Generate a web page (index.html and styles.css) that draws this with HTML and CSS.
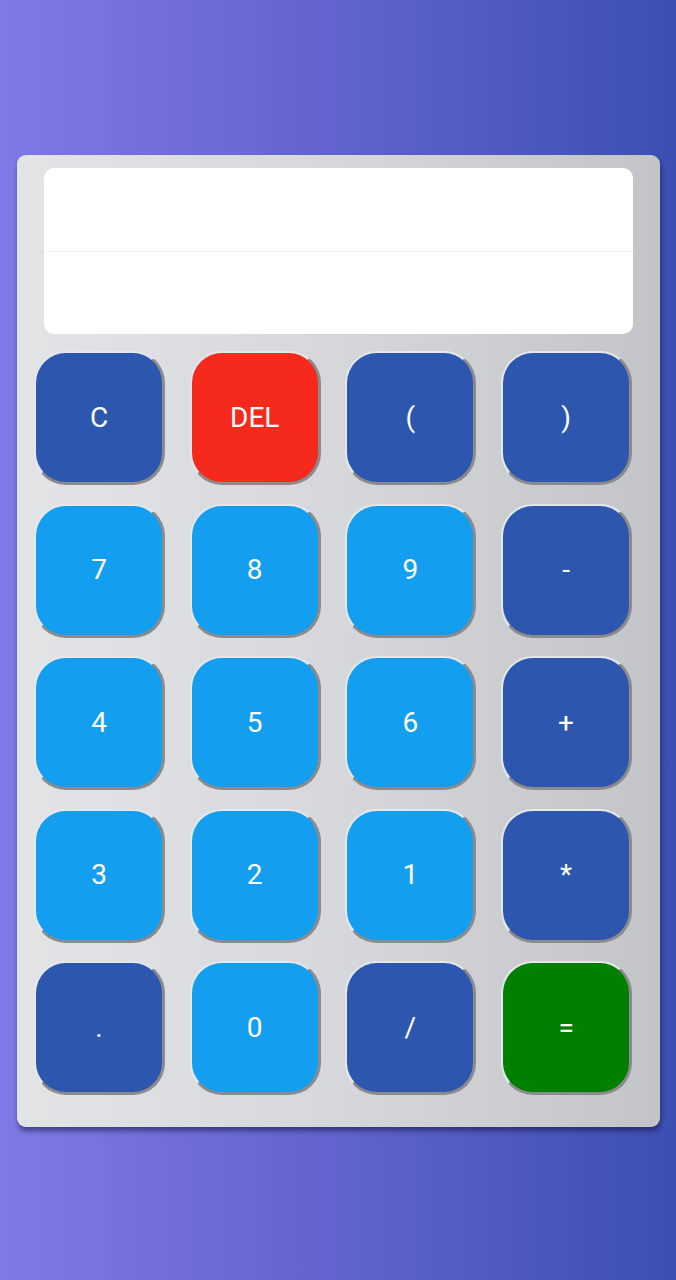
FILE: index.html
```html
<!DOCTYPE html>
<html lang="en">
<head>
<meta charset="utf-8">
<title>Calculator</title>
<link rel="stylesheet" href="styles.css">
</head>
<body>
<main class="calc">
  <div class="display">
    <div class="line"></div>
    <div class="line last"></div>
  </div>
  <div class="keys">
    <button class="key dark">C</button>
    <button class="key red">DEL</button>
    <button class="key dark">(</button>
    <button class="key dark">)</button>
    <button class="key light">7</button>
    <button class="key light">8</button>
    <button class="key light">9</button>
    <button class="key dark">-</button>
    <button class="key light">4</button>
    <button class="key light">5</button>
    <button class="key light">6</button>
    <button class="key dark">+</button>
    <button class="key light">3</button>
    <button class="key light">2</button>
    <button class="key light">1</button>
    <button class="key dark">*</button>
    <button class="key dark">.</button>
    <button class="key light">0</button>
    <button class="key dark">/</button>
    <button class="key green">=</button>
  </div>
</main>
</body>
</html>
```
FILE: styles.css
```css
html, body {
  margin: 0;
  padding: 0;
}
body {
  width: 676px;
  height: 1280px;
  padding-top: 155px;
  box-sizing: border-box;
  background: linear-gradient(to right, #7f79e7 0%, #6565d2 45%, #3d4fb3 100%);
  font-family: Roboto, "Liberation Sans", sans-serif;
  overflow: hidden;
}
.calc {
  margin-left: 17px;
  width: 643px;
  height: 972px;
  box-sizing: border-box;
  padding: 13px 0 32px 17px;
  border-radius: 9px;
  background: linear-gradient(to right, #e3e4e6 0%, #d6d7da 50%, #c3c4c8 100%);
  box-shadow: 1px 4px 5px rgba(20, 20, 60, 0.55);
}
.display {
  margin-left: 10px;
  width: 589px;
  height: 166px;
  background: #fff;
  border-radius: 10px;
  display: flex;
  flex-direction: column;
  margin-bottom: 17px;
}
.line {
  flex: 1;
  border-bottom: 1px solid #f3f3f3;
}
.line.last {
  border-bottom: none;
}
.keys {
  display: grid;
  grid-template-columns: repeat(4, 131px);
  grid-auto-rows: 134px;
  column-gap: 24.7px;
  row-gap: 18.5px;
}
.key {
  margin: 0;
  padding: 0;
  border-style: solid;
  border-width: 2px 3px 3px 2px;
  border-color: #e4e8ee #8b8b8d #8b8b8d #e4e8ee;
  border-radius: 32px;
  color: #fff;
  font-family: Roboto, "Liberation Sans", sans-serif;
  font-size: 28px;
  line-height: 1;
}
.dark { background: #2d57ae; }
.light { background: #139ef0; }
.red { background: #f52a1c; }
.green { background: #008000; }
```
